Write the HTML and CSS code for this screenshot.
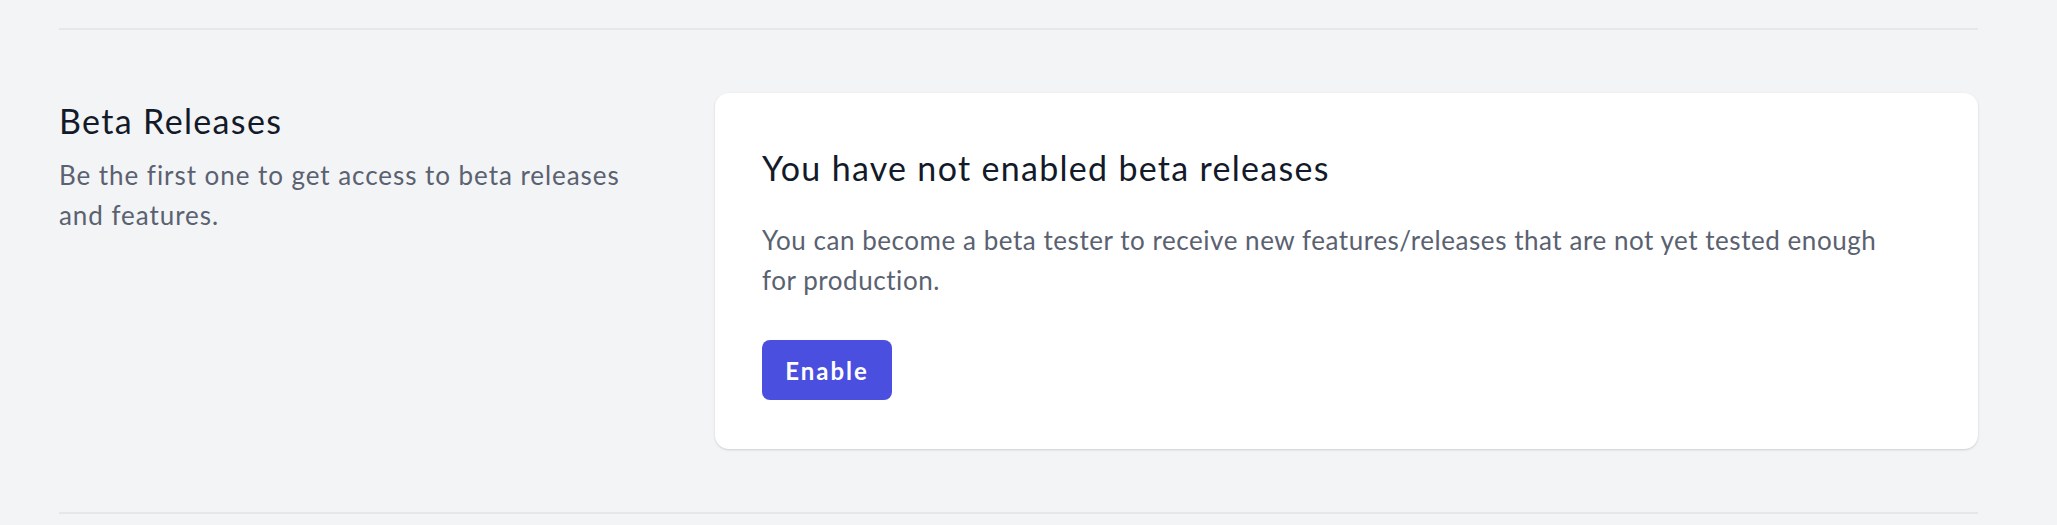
FILE: index.html
```html
<!DOCTYPE html>
<html lang="en">
<head>
<meta charset="utf-8">
<title>Beta Releases</title>
<link rel="stylesheet" href="styles.css">
</head>
<body>
<div class="page">
  <div class="divider divider-top"></div>
  <section class="section">
    <div class="intro">
      <h3 class="intro-title">Beta Releases</h3>
      <p class="intro-text">Be the first one to get access to beta releases and features.</p>
    </div>
    <div class="card">
      <h4 class="card-title">You have not enabled beta releases</h4>
      <p class="card-text">You can become a beta tester to receive new features/releases that are not yet tested enough for production.</p>
      <button class="btn" type="button">Enable</button>
    </div>
  </section>
  <div class="divider"></div>
</div>
</body>
</html>
```

FILE: styles.css
```css
html, body {
  margin: 0;
  padding: 0;
  background: #f3f4f6;
}

body {
  font-family: "Lato", "Liberation Sans", sans-serif;
  -webkit-font-smoothing: antialiased;
}

.page {
  width: 1919px;
  padding-left: 59px;
  padding-top: 28px;
}

.divider {
  height: 2px;
  background: #e5e7eb;
}

.section {
  display: grid;
  grid-template-columns: 607px 1fr;
  column-gap: 49px;
  padding: 63px 0;
  align-items: start;
}

.intro {
  padding-top: 6px;
}

.intro-title {
  margin: 0;
  font-size: 34px;
  line-height: 44px;
  font-weight: 400;
  letter-spacing: 1.35px;
  color: #131a2a;
}

.intro-text {
  margin: 12px 0 0;
  max-width: 590px;
  font-size: 26px;
  line-height: 40px;
  letter-spacing: 0.95px;
  color: #5a6170;
}

.card {
  background: #ffffff;
  border-radius: 14px;
  box-shadow: 0 1px 3px rgba(0, 0, 0, 0.10), 0 1px 2px rgba(0, 0, 0, 0.06);
  padding: 55px 47px 49px;
}

.card-title {
  margin: 0;
  font-size: 34px;
  line-height: 40px;
  font-weight: 400;
  letter-spacing: 1.3px;
  color: #131a2a;
}

.card-text {
  margin: 32px 0 0;
  max-width: 1140px;
  font-size: 26px;
  line-height: 40px;
  letter-spacing: 0.55px;
  color: #5a6170;
}

.btn {
  display: block;
  margin-top: 40px;
  width: 130px;
  height: 60px;
  border: 0;
  border-radius: 8px;
  background: #4a4fe0;
  color: #ffffff;
  font-family: inherit;
  font-size: 24px;
  font-weight: 700;
  letter-spacing: 2px;
  cursor: pointer;
}
```
